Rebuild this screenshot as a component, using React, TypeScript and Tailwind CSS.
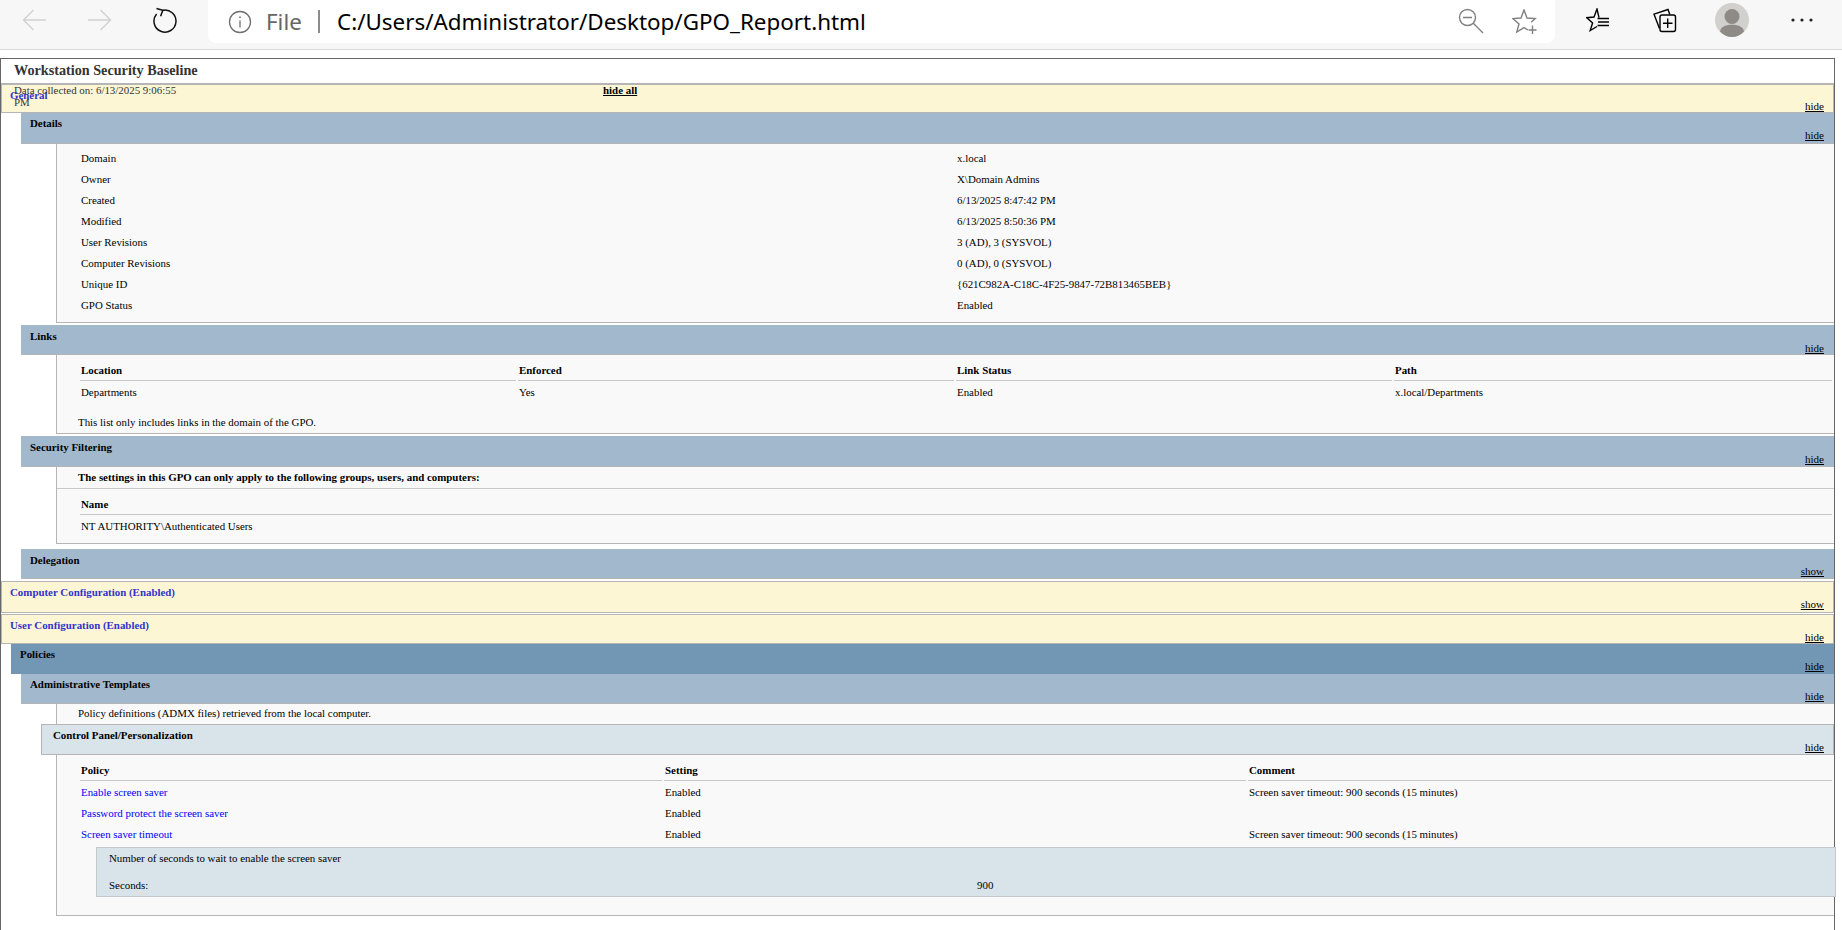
import * as React from "react"

const serif = "font-['Liberation_Serif','Times_New_Roman',serif]"

function Bar({
  title,
  className,
  textClass,
  label = "hide",
  linkClass = "right-[10px] bottom-0",
  children,
}: {
  title: string
  className: string
  textClass: string
  label?: string
  linkClass?: string
  children?: React.ReactNode
}) {
  return (
    <div className={`relative ${className}`}>
      <span className={`block text-[10.9px] font-bold leading-[13px] ${textClass}`}>{title}</span>
      <a className={`absolute text-[11px] leading-[13px] text-black underline ${linkClass}`}>{label}</a>
      {children}
    </div>
  )
}

function Panel({ children, className = "" }: { children: React.ReactNode; className?: string }) {
  return <div className={`ml-[55px] border-b border-l border-[#b5b5b5] bg-[#f9f9f9] ${className}`}>{children}</div>
}

const blueBar = "ml-[20px] border-b border-[#b5b5b5] bg-[#a2b8cc] pl-[9px]"
const yellowBar = "border border-[#b5b5b5] bg-[#fdf6d5] pl-[8px]"

const details = [
  ["Domain", "x.local"],
  ["Owner", "X\\Domain Admins"],
  ["Created", "6/13/2025 8:47:42 PM"],
  ["Modified", "6/13/2025 8:50:36 PM"],
  ["User Revisions", "3 (AD), 3 (SYSVOL)"],
  ["Computer Revisions", "0 (AD), 0 (SYSVOL)"],
  ["Unique ID", "{621C982A-C18C-4F25-9847-72B813465BEB}"],
  ["GPO Status", "Enabled"],
]

const policies = [
  ["Enable screen saver", "Enabled", "Screen saver timeout: 900 seconds (15 minutes)"],
  ["Password protect the screen saver", "Enabled", ""],
  ["Screen saver timeout", "Enabled", "Screen saver timeout: 900 seconds (15 minutes)"],
]

function Toolbar() {
  return (
    <div className="flex h-[50px] border-b border-[#d9d9d9] bg-[#f7f7f7]">
      <div className="flex h-[40px] w-[208px] shrink-0 items-center">
        {/* Back */}
        <svg width="24" height="22" viewBox="0 0 24 22" fill="none" stroke="#d2d2d2" strokeWidth="1.4" className="ml-[22px]">
          <path d="M24 11H1.5M11.5 1 1.5 11l10 10" />
        </svg>
        {/* Forward */}
        <svg width="24" height="22" viewBox="0 0 24 22" fill="none" stroke="#d2d2d2" strokeWidth="1.4" className="ml-[42px]">
          <path d="M0 11h22.5M12.5 1l10 10-10 10" />
        </svg>
        {/* Reload */}
        <svg width="25" height="26" viewBox="0 0 25 26" fill="none" stroke="#111111" strokeWidth="1.5" className="ml-[41px]">
          <path d="M9.5 3.4A11 11 0 1 1 3.6 7" />
          <path d="M3.5 1.5 9.8 3.3 7.6 9.2" />
        </svg>
      </div>

      {/* Address box */}
      <div className="flex h-[43px] w-[1347px] shrink-0 items-center rounded-b-lg bg-white font-['Noto_Sans',sans-serif] text-[22.4px]">
        <svg width="24" height="24" viewBox="0 0 24 24" fill="none" stroke="#6f6f6f" strokeWidth="1.3" className="ml-[20px] shrink-0">
          <circle cx="12" cy="12" r="10.5" />
          <path d="M12 10.5v7" />
          <circle cx="12" cy="7.2" r="0.9" fill="#6f6f6f" stroke="none" />
        </svg>
        <span className="ml-[14px] w-[52px] text-[#666666]">File</span>
        <span className="h-[23px] w-[2px] bg-[#8c8c8c]" />
        <span className="ml-[17px] text-black">C:/Users/Administrator/Desktop/GPO_Report.html</span>

        {/* Zoom out */}
        <svg width="26" height="26" viewBox="0 0 26 26" fill="none" stroke="#808080" strokeWidth="1.4" className="ml-auto mb-[2px] shrink-0">
          <circle cx="9.5" cy="9.5" r="8" />
          <path d="M5 9.5h9M15 15l10 10" />
        </svg>
        {/* Add to favorites */}
        <svg width="26" height="26" viewBox="0 0 26 26" fill="none" stroke="#808080" strokeWidth="1.4" className="mr-[17px] ml-[28px] shrink-0">
          <path d="M16 21 12 18.6 4.8 23 7 15 .8 9.6 9 9 12 1l3 8 8.2.6-4 3.6" />
          <path d="M20.5 16.5v8.5M16.5 21h8" />
        </svg>
      </div>

      <div className="flex h-[40px] items-center">
        {/* Favorites */}
        <svg width="24" height="24" viewBox="0 0 24 24" fill="none" stroke="#000000" strokeWidth="1.4" className="ml-[31px]">
          <path d="M13 9.6 11 1 8 9 .8 9.7 6.6 15 4.2 22.5 11 18.5" />
          <path d="M11.5 10.5H23M12 14H23M11.5 17.5H23" />
        </svg>
        {/* Collections */}
        <svg width="24" height="25" viewBox="0 0 24 25" fill="none" stroke="#000000" strokeWidth="1.4" className="ml-[43px]">
          <path d="M6.5 20.5 1 6.2 15 1.5l1.8 5" />
          <rect x="7" y="7" width="15.5" height="16.5" rx="2" />
          <path d="M14.7 10.5v9.5M10 15.2h9.5" />
        </svg>
        {/* Profile */}
        <svg width="34" height="34" viewBox="0 0 34 34" className="ml-[38px]">
          <circle cx="17" cy="17" r="17" fill="#d1d0cc" />
          <circle cx="17" cy="13.5" r="7.5" fill="#8e8b87" />
          <path d="M5 28.5C6 23 12 21.8 17 21.8S28 23 29 28.5C26 32 21.5 34 17 34S8 32 5 28.5Z" fill="#8e8b87" />
        </svg>
        {/* More */}
        <svg width="24" height="4" viewBox="0 0 24 4" fill="#222222" className="ml-[42px]">
          <circle cx="2" cy="2" r="1.6" />
          <circle cx="11" cy="2" r="1.6" />
          <circle cx="20" cy="2" r="1.6" />
        </svg>
      </div>
    </div>
  )
}

export default function App() {
  return (
    <div className={`h-[930px] w-[1842px] overflow-hidden bg-white text-[10.9px] leading-[13px] text-black ${serif}`}>
      <Toolbar />
      <div className="mt-[8px] h-[872px] w-[1835px] border-x border-t border-[#666666]">
        <div className="h-[25px] border-b border-[#b5b5b5] pl-[13px] pt-[3px] text-[14.2px] font-bold leading-[16px] text-[#333333]">
          Workstation Security Baseline
        </div>

        {/* General */}
        <Bar title="General" className={`h-[29px] pt-[4px] ${yellowBar}`} textClass="text-[#3333cc]" linkClass="right-[9px] bottom-[-1px]">
          <span className="absolute left-[12px] top-[-1px] w-[170px] leading-[12px] text-[#333333]">Data collected on: 6/13/2025 9:06:55 PM</span>
          <a className="absolute left-[601px] top-[-1px] font-bold text-black underline">hide all</a>
        </Bar>
        <Bar title="Details" className={`h-[31px] pt-[4px] ${blueBar}`} textClass="text-black" linkClass="right-[10px] bottom-[1px]" />
        <Panel className="h-[179px] pt-[4px]">
          {details.map(([a, b]) => (
            <div key={a} className="flex h-[21px] items-center pl-[24px]">
              <span className="w-[876px]">{a}</span>
              <span>{b}</span>
            </div>
          ))}
        </Panel>

        <Bar title="Links" className={`mt-[2px] h-[30px] pt-[5px] ${blueBar}`} textClass="text-black" linkClass="right-[10px] bottom-[-1px]" />
        <Panel className="h-[79px] pt-[6px]">
          <div className="mr-[2px] ml-[23px] grid grid-cols-[436px_436px_436px_1fr] gap-x-[2px]">
            {["Location", "Enforced", "Link Status", "Path"].map((h) => (
              <div key={h} className="flex h-[20px] items-center border-b border-[#c8c8c8] pl-[1px] font-bold">{h}</div>
            ))}
            {["Departments", "Yes", "Enabled", "x.local/Departments"].map((c) => (
              <div key={c} className="flex h-[22px] items-center pl-[1px]">{c}</div>
            ))}
          </div>
          <p className="mt-[13px] ml-[21px]">This list only includes links in the domain of the GPO.</p>
        </Panel>

        <Bar title="Security Filtering" className={`mt-[2px] h-[31px] pt-[5px] ${blueBar}`} textClass="text-black" />
        <Panel className="h-[77px]">
          <div className="h-[22px] border-b border-[#c8c8c8] pl-[21px] pt-[4px] font-bold">
            The settings in this GPO can only apply to the following groups, users, and computers:
          </div>
          <div className="mt-[6px] mr-[2px] ml-[23px]">
            <div className="flex h-[20px] items-center border-b border-[#c8c8c8] pl-[1px] font-bold">Name</div>
            <div className="flex h-[22px] items-center pl-[1px]">NT AUTHORITY\Authenticated Users</div>
          </div>
        </Panel>

        <Bar title="Delegation" label="show" className={`mt-[5px] h-[30px] pt-[5px] ${blueBar}`} textClass="text-black" />

        {/* Computer / User configuration */}
        <Bar title="Computer Configuration (Enabled)" label="show" className={`mt-[2px] h-[32px] pt-[4px] ${yellowBar}`} textClass="text-[#3333cc]" linkClass="right-[9px] bottom-[1px]" />
        <Bar title="User Configuration (Enabled)" className={`mt-[1px] h-[30px] pt-[4px] ${yellowBar}`} textClass="text-[#3333cc]" linkClass="right-[9px] bottom-[-1px]" />
        <Bar title="Policies" className="ml-[10px] h-[30px] bg-[#7297b5] pl-[9px] pt-[4px]" textClass="text-black" linkClass="right-[10px] bottom-[1px]" />
        <Bar title="Administrative Templates" className={`h-[30px] pt-[4px] ${blueBar}`} textClass="text-black" />

        <Panel className="h-[212px]">
          <p className="pl-[21px] pt-[3px]">Policy definitions (ADMX files) retrieved from the local computer.</p>
          <div className="-ml-[16px] mt-[4px]">
            <Bar title="Control Panel/Personalization" className="h-[31px] border border-[#b5b5b5] bg-[#d9e3ea] pl-[11px] pt-[4px]" textClass="text-black" linkClass="right-[9px] bottom-0" />
          </div>
          <div className="mt-[6px] mr-[2px] ml-[23px] grid grid-cols-[582px_582px_1fr] gap-x-[2px]">
            {["Policy", "Setting", "Comment"].map((h) => (
              <div key={h} className="flex h-[20px] items-center border-b border-[#c8c8c8] pl-[1px] font-bold">{h}</div>
            ))}
            {policies.map(([p, s, c]) => (
              <React.Fragment key={p}>
                <a className="flex h-[21px] items-center pl-[1px] pt-[2px] text-[#0000ff]">{p}</a>
                <div className="flex h-[21px] items-center pl-[1px] pt-[2px]">{s}</div>
                <div className="flex h-[21px] items-center pl-[1px] pt-[2px]">{c}</div>
              </React.Fragment>
            ))}
          </div>
          <div className="mt-[3px] ml-[39px] h-[50px] w-[1740px] border border-[#c4c8cb] bg-[#d9e3ea] pl-[12px] pt-[4px]">
            <p>Number of seconds to wait to enable the screen saver</p>
            <div className="mt-[14px] flex">
              <span className="w-[868px]">Seconds:</span>
              <span>900</span>
            </div>
          </div>
        </Panel>
      </div>
    </div>
  )
}
